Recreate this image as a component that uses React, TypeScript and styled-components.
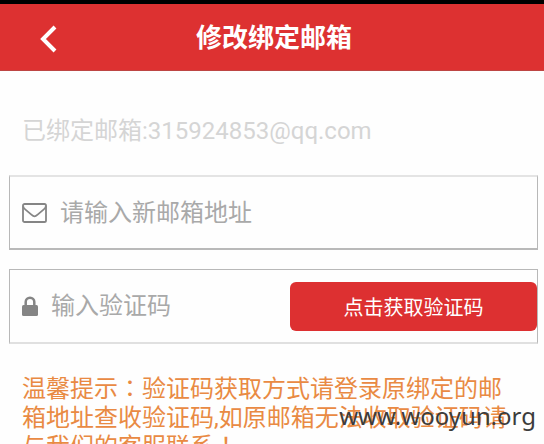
import React from 'react';
import styled, { createGlobalStyle } from 'styled-components';

const GlobalStyle = createGlobalStyle`
  * { box-sizing: border-box; }
  html, body { margin: 0; background: #fefefe; }
  body, button, input { font-family: Roboto, 'Noto Sans CJK SC', sans-serif; }
`;

const Page = styled.div`
  position: relative;
  height: 100vh;
  overflow: hidden;
  background: #fefefe;
`;

const Header = styled.header`
  display: grid;
  grid-template-columns: 96px 1fr 92px;
  align-items: center;
  height: 71px;
  border-top: 4px solid #000;
  border-bottom: 1px solid #bd4543;
  background: #dd3131;
`;

const BackButton = styled.button`
  display: flex;
  justify-content: center;
  padding: 4px 0 0;
  border: 0;
  background: none;
  color: #fff;
`;

const Title = styled.h1`
  margin: 0;
  padding-top: 2px;
  color: #fff;
  font-size: 26px;
  line-height: 38px;
  font-weight: 700;
  text-align: center;
`;

const Bound = styled.p`
  margin: 42px 22px 26px;
  color: #d5d5d5;
  font-size: 24px;
  line-height: 36px;
`;

const Form = styled.form`
  display: flex;
  flex-direction: column;
  gap: 19px;
  margin: 0 6px 0 9px;
`;

const Field = styled.label<{ $top: string; $bottom: string }>`
  display: flex;
  align-items: center;
  gap: 13px;
  height: 75px;
  padding-left: 12px;
  border: 1px solid #b8b8b8;
  border-top: ${(p) => p.$top};
  border-bottom: ${(p) => p.$bottom};
  color: #858585;

  svg { flex: none; }
`;

const Input = styled.input`
  flex: 1;
  min-width: 0;
  height: 40px;
  padding: 0;
  border: 0;
  outline: 0;
  background: none;
  color: #555;
  font-size: 24px;

  &::placeholder { color: #a9a9a9; opacity: 1; }
`;

const CodeButton = styled.button`
  flex: 0 0 48%;
  height: 49px;
  padding: 0;
  border: 0;
  border-radius: 6px;
  background: #dd3031;
  color: #fff;
  font-size: 20px;
`;

const Tip = styled.p`
  margin: 31px 22px 0;
  color: #e98a43;
  font-size: 24px;
  line-height: 29px;
`;

const Mark = styled.span`
  font-family: 'Noto Sans CJK TC', sans-serif;
  line-height: 1;
`;

const Watermark = styled.div`
  position: absolute;
  right: 8px;
  bottom: 11px;
  color: #3c3c3c;
  font-family: 'Noto Sans', sans-serif;
  font-size: 24px;
  line-height: 34px;
`;

const BackIcon = () => (
  <svg width="18" height="28" viewBox="0 0 18 28" fill="none" stroke="currentColor" strokeWidth="4" aria-hidden="true">
    <path d="M16 2 4 14l12 12" />
  </svg>
);

const EnvelopeIcon = () => (
  <svg width="25" height="20" viewBox="0 0 25 20" fill="none" stroke="currentColor" strokeWidth="1.8" aria-hidden="true">
    <rect x="1" y="1" width="23" height="18" rx="1.6" />
    <path d="M1.2 3.2c0 1.3.8 2.300 2 3.200l6.200 5.200c1 .9 2 1.700 3.100 1.700s2.100-.8 3.100-1.700l6.200-5.200c1.200-.9 2-1.900 2-3.200" />
  </svg>
);

const LockIcon = () => (
  <svg width="16" height="20" viewBox="0 0 16 20" aria-hidden="true">
    <path d="M3.7 10V6a4.300 4.300 0 0 1 8.600 0v4" fill="none" stroke="currentColor" strokeWidth="2.5" />
    <rect y="9" width="16" height="11" rx="1.5" fill="currentColor" />
  </svg>
);

export default function App() {
  return (
    <Page>
      <GlobalStyle />
      <Header>
        <BackButton type="button" aria-label="返回"><BackIcon /></BackButton>
        <Title>修改绑定邮箱</Title>
      </Header>
      <main>
        <Bound>已绑定邮箱:315924853@qq.com</Bound>
        <Form>
          <Field $top="2px solid #e4e4e4" $bottom="2px solid #b9b9b9">
            <EnvelopeIcon />
            <Input type="email" aria-label="新邮箱地址" placeholder="请输入新邮箱地址" />
          </Field>
          <Field $top="1px solid #b8b8b8" $bottom="2px solid #e0e0e0">
            <LockIcon />
            <Input type="text" aria-label="验证码" placeholder="输入验证码" />
            <CodeButton type="button">点击获取验证码</CodeButton>
          </Field>
        </Form>
        <Tip>
          温馨提示<Mark>：</Mark>验证码获取方式请登录原绑定的邮箱地址查收验证码,如原邮箱无法收取验证码请与我们的客服联系<Mark>！</Mark>
        </Tip>
      </main>
      <Watermark>www.wooyun.org</Watermark>
    </Page>
  );
}
